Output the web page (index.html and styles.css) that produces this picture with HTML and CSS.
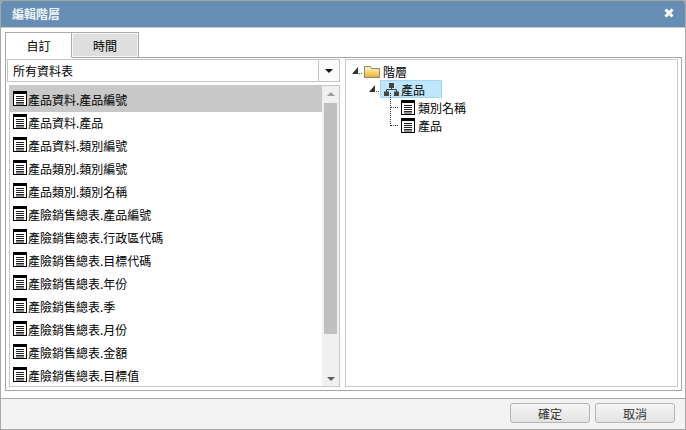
FILE: index.html
```html
<!DOCTYPE html>
<html lang="zh-Hant">
<head>
<meta charset="utf-8">
<title>編輯階層</title>
<link rel="stylesheet" href="styles.css">
</head>
<body>
<svg class="defs" width="0" height="0">
  <defs>
    <linearGradient id="folderFill" x1="0" y1="0" x2="0" y2="1">
      <stop offset="0" stop-color="#fff2c0"/>
      <stop offset="0.5" stop-color="#f8d878"/>
      <stop offset="1" stop-color="#e8a838"/>
    </linearGradient>
    <symbol id="doc" viewBox="0 0 14 15">
      <path d="M0 0h14v15H0z" fill="#000"/>
      <path d="M1 3h12v11H1z" fill="#fff"/>
      <path d="M3 5h8v1H3zM3 7h8v1H3zM3 9h8v1H3zM3 11h8v1H3zM3 12.500h8v1H3z" fill="#222"/>
    </symbol>
    <symbol id="tri" viewBox="0 0 10 10">
      <path d="M6 1v7H0z" fill="#333"/>
      <path d="M7 7h1v1H7zM9 7h1v1H9z" fill="#555"/>
    </symbol>
  </defs>
</svg>
<div class="dialog">
  <header class="title">
    <span class="title-text">編輯階層</span>
    <svg class="close" width="10" height="10" viewBox="0 0 10 10"><path d="M1.500 1.500l7 7M8.500 1.500l-7 7" stroke="#fff" stroke-width="3"/></svg>
  </header>
  <main class="body">
    <div class="tabs">
      <div class="tab tab-active">自訂</div>
      <div class="tab tab-idle">時間</div>
    </div>
    <div class="panel">
      <section class="left">
        <div class="select">
          <span class="select-text">所有資料表</span>
          <span class="select-btn"><span class="arrow-down-dark"></span></span>
        </div>
        <div class="list">
          <ul class="items">
            <li class="item item-sel"><svg class="doc"><use href="#doc"/></svg>產品資料.產品編號</li>
            <li class="item"><svg class="doc"><use href="#doc"/></svg>產品資料.產品</li>
            <li class="item"><svg class="doc"><use href="#doc"/></svg>產品資料.類別編號</li>
            <li class="item"><svg class="doc"><use href="#doc"/></svg>產品類別.類別編號</li>
            <li class="item"><svg class="doc"><use href="#doc"/></svg>產品類別.類別名稱</li>
            <li class="item"><svg class="doc"><use href="#doc"/></svg>產險銷售總表.產品編號</li>
            <li class="item"><svg class="doc"><use href="#doc"/></svg>產險銷售總表.行政區代碼</li>
            <li class="item"><svg class="doc"><use href="#doc"/></svg>產險銷售總表.目標代碼</li>
            <li class="item"><svg class="doc"><use href="#doc"/></svg>產險銷售總表.年份</li>
            <li class="item"><svg class="doc"><use href="#doc"/></svg>產險銷售總表.季</li>
            <li class="item"><svg class="doc"><use href="#doc"/></svg>產險銷售總表.月份</li>
            <li class="item"><svg class="doc"><use href="#doc"/></svg>產險銷售總表.金額</li>
            <li class="item"><svg class="doc"><use href="#doc"/></svg>產險銷售總表.目標值</li>
          </ul>
          <div class="scrollbar">
            <span class="arrow-up"></span>
            <span class="thumb"></span>
            <span class="arrow-down"></span>
          </div>
        </div>
      </section>
      <section class="tree">
        <div class="node node-root">
          <svg class="tri"><use href="#tri"/></svg>
          <svg class="folder" width="16" height="13" viewBox="0 0 16 13">
            <path d="M0.500 12.500V1.500h6l1 2h8v9z" fill="url(#folderFill)" stroke="#8f8a70"/>
          </svg>
          <span class="label">階層</span>
        </div>
        <div class="node node-level">
          <svg class="tri"><use href="#tri"/></svg>
          <span class="sel-box">
            <svg class="org" width="15" height="13" viewBox="0 0 15 13">
              <path d="M5 0h5v5H5zM0 8.500h5V13H0zM10 8.500h5V13h-5z" fill="#444"/>
              <path d="M7.500 5v2M2.500 9V6.500h10V9" stroke="#444" fill="none"/>
            </svg>
            <span class="label">產品</span>
          </span>
        </div>
        <div class="children">
          <div class="node-leaf"><svg class="doc"><use href="#doc"/></svg><span class="label">類別名稱</span></div>
          <div class="node-leaf"><svg class="doc"><use href="#doc"/></svg><span class="label">產品</span></div>
        </div>
      </section>
    </div>
  </main>
  <footer class="footer">
    <button class="btn">確定</button>
    <button class="btn">取消</button>
  </footer>
</div>
</body>
</html>
```
FILE: styles.css
```css
* { box-sizing: border-box; }
html, body { margin: 0; padding: 0; }
body {
  width: 686px;
  height: 430px;
  overflow: hidden;
  background: #a6a6a6;
  font-family: "Noto Sans CJK TC", "Liberation Sans", sans-serif;
  font-size: 12px;
  color: #000;
}
.defs { position: absolute; }
.dialog {
  width: 686px;
  height: 429px;
  margin-top: 1px;
  display: flex;
  flex-direction: column;
  background: #fff;
  border-left: 1px solid #a8a8a8;
  border-right: 1px solid #a8a8a8;
  border-bottom: 1px solid #a8a8a8;
  border-radius: 3px 3px 0 0;
  overflow: hidden;
}
.title {
  height: 27px;
  flex: none;
  display: flex;
  align-items: center;
  justify-content: space-between;
  padding: 0 11px 2px 11px;
  background: #668db3;
  color: #fff;
  font-weight: 700;
  border-bottom: 1px solid #c8ced4;
}
.title-text { color: #eef3f8; }
.close { display: block; }
.body {
  flex: 1;
  display: flex;
  flex-direction: column;
  padding: 4px 3px 7px 4px;
  min-height: 0;
}
.tabs { display: flex; height: 26px; flex: none; }
.tab {
  width: 67px;
  height: 26px;
  display: flex;
  align-items: center;
  justify-content: center;
  border: 1px solid #aaa;
  position: relative;
}
.tab + .tab { margin-left: -1px; width: 68px; }
.tab-active { background: #fff; border-bottom-color: #fff; z-index: 1; }
.tab-idle { background: #dedede; box-shadow: inset 0 0 0 1px #f4f4f4; }
.panel {
  flex: 1;
  margin-top: -1px;
  border: 1px solid #a4a4a4;
  padding: 1px 3px 3px 1px;
  display: flex;
  gap: 5px;
  min-height: 0;
}
.left { width: 333px; display: flex; flex-direction: column; }
.select {
  height: 23px;
  flex: none;
  display: flex;
  align-items: stretch;
  justify-content: space-between;
  border: 1px solid #c4c4c4;
  background: #fff;
  padding-left: 5px;
}
.select-text { line-height: 21px; }
.select-btn {
  width: 21px;
  display: flex;
  align-items: center;
  justify-content: center;
  background: #fafafa;
  border-left: 1px solid #c4c4c4;
}
.arrow-down-dark {
  width: 0; height: 0;
  border-left: 4px solid transparent;
  border-right: 4px solid transparent;
  border-top: 4px solid #111;
}
.list {
  flex: 1;
  margin: 3px 0 0 2px;
  border: 1px solid #c8c8c8;
  display: flex;
  min-height: 0;
  overflow: hidden;
}
.items { flex: 1; margin: 0; padding: 0; list-style: none; min-width: 0; }
.item {
  height: 23px;
  display: flex;
  align-items: center;
  padding-left: 3px;
  white-space: nowrap;
}
.item-sel { background: #c8c8c8; height: 26px; margin-bottom: -1px; }
.doc { width: 14px; height: 15px; flex: none; }
.item .doc { margin: 0 1px 2px 0; }
.scrollbar {
  width: 17px;
  flex: none;
  background: #f0f0f0;
  display: flex;
  flex-direction: column;
  align-items: center;
  padding: 6px 0 5px;
}
.arrow-up {
  width: 0; height: 0;
  border-left: 4px solid transparent;
  border-right: 4px solid transparent;
  border-bottom: 4px solid #a0a0a0;
}
.thumb { width: 13px; height: 231px; background: #c0c0c0; margin: 7px 0 auto; flex: none; }
.arrow-down {
  width: 0; height: 0;
  border-left: 4px solid transparent;
  border-right: 4px solid transparent;
  border-top: 4px solid #606060;
}
.tree {
  flex: 1;
  border: 1px solid #c8c8c8;
  padding: 2px 0 0 6px;
  min-width: 0;
}
.node { display: flex; align-items: center; height: 18px; }
.tri { width: 10px; height: 10px; flex: none; }
.node-root .folder { margin-left: 2px; margin-right: 3px; }
.node-level { padding-left: 17px; height: 18px; }
.sel-box {
  display: flex;
  align-items: center;
  height: 18px;
  width: 62px;
  margin-left: 1px;
  padding-left: 3px;
  background: #bfe6fd;
  border: 1px solid #9fd6f6;
  gap: 2px;
}
.children {
  margin-left: 38px;
  padding-left: 11px;
  position: relative;
}
.children::before {
  content: "";
  position: absolute;
  left: 0;
  top: -5px;
  bottom: 8px;
  border-left: 1px dotted #333;
}
.node-leaf {
  display: flex;
  align-items: center;
  height: 18px;
  position: relative;
  gap: 3px;
}
.node-leaf::before {
  content: "";
  position: absolute;
  left: -10px;
  width: 7px;
  top: 9px;
  border-top: 1px dotted #333;
}
.footer {
  height: 31px;
  flex: none;
  border-top: 1px solid #aaa;
  background: #f3f3f3;
  display: flex;
  justify-content: flex-end;
  align-items: flex-start;
  gap: 5px;
  padding: 4px 10px 0 0;
}
.btn {
  width: 80px;
  height: 20px;
  padding: 0;
  border: 1px solid #b4b4b4;
  border-radius: 3px;
  background: linear-gradient(#f6f6f6, #e2e2e2);
  color: #333;
  font: inherit;
}
```
